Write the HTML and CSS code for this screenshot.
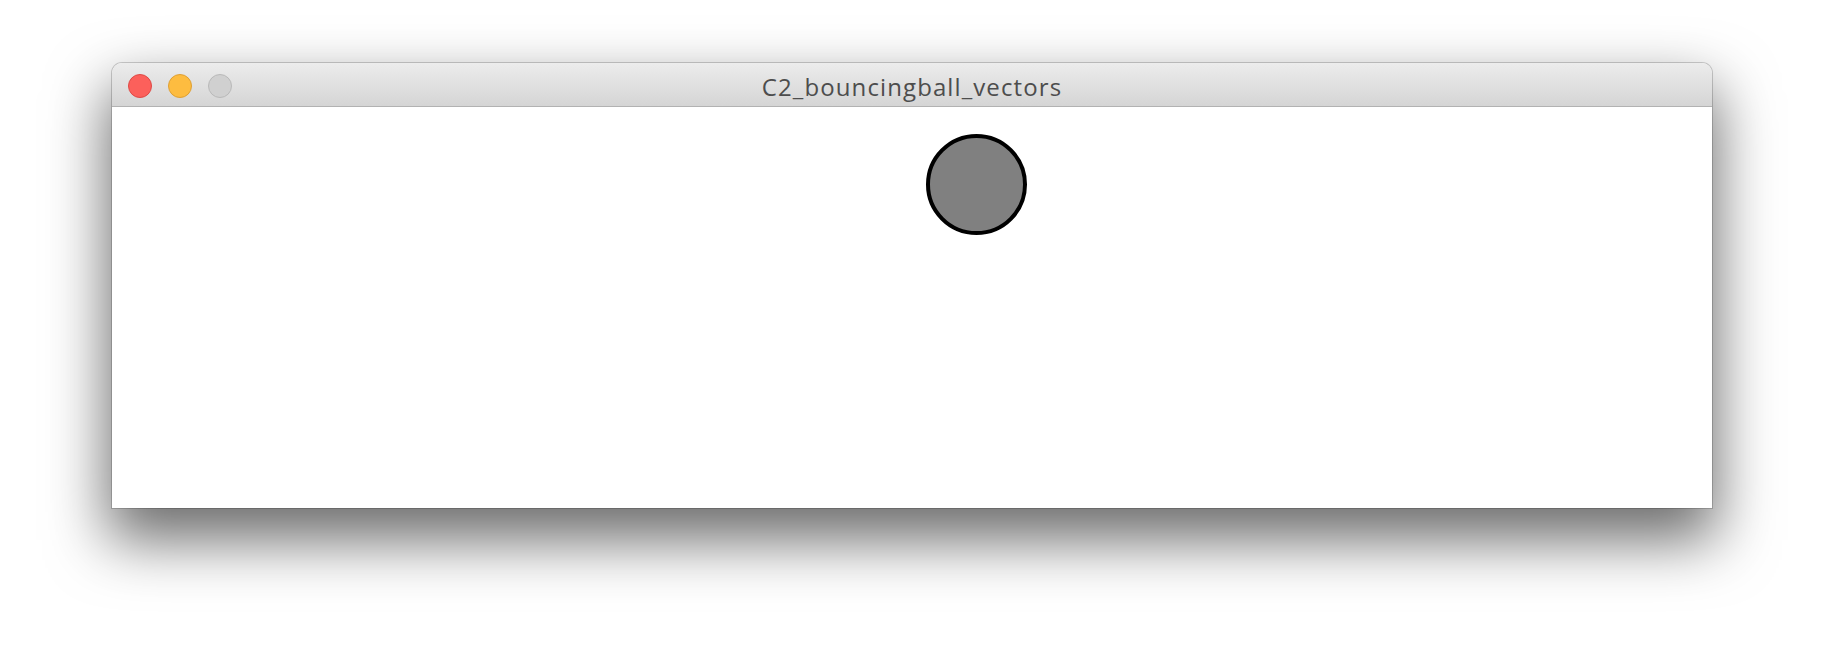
FILE: index.html
```html
<!DOCTYPE html>
<html>
<head>
<meta charset="utf-8">
<link rel="stylesheet" href="styles.css">
</head>
<body>
<div class="window">
  <div class="titlebar">
    <div class="lights">
      <span class="light red"></span>
      <span class="light yellow"></span>
      <span class="light gray"></span>
    </div>
    <div class="title">C2_bouncingball_vectors</div>
  </div>
  <div class="canvas">
    <div class="ball"></div>
  </div>
</div>
</body>
</html>
```
FILE: styles.css
```css
html, body {
  margin: 0;
  padding: 0;
  background: #ffffff;
}
body {
  width: 1824px;
  height: 668px;
  overflow: hidden;
  padding-top: 63px;
  box-sizing: border-box;
}
.window {
  margin-left: 112px;
  width: 1600px;
  height: 445px;
  border-radius: 10px 10px 0 0;
  box-shadow: 0 28px 60px 4px rgba(0,0,0,0.58), 0 0 0 1px rgba(0,0,0,0.18);
  display: flex;
  flex-direction: column;
  background: #fff;
}
.titlebar {
  position: relative;
  height: 43px;
  flex: none;
  border-radius: 10px 10px 0 0;
  background: linear-gradient(#ececec, #d5d5d5);
  border-bottom: 1px solid #b2b2b2;
  display: flex;
  align-items: center;
  justify-content: center;
}
.lights {
  position: absolute;
  left: 16px;
  top: 11px;
  display: flex;
  gap: 16px;
}
.light {
  width: 24px;
  height: 24px;
  border-radius: 50%;
  box-sizing: border-box;
  display: block;
}
.red { background: #fc605b; border: 1px solid #de4a46; }
.yellow { background: #fdbc40; border: 1px solid #dea034; }
.gray { background: #d0d0d0; border: 1px solid #b9b9b9; }
.title {
  font-family: "Open Sans", "Liberation Sans", sans-serif;
  font-size: 24px;
  letter-spacing: 1.1px;
  color: #4d4d4d;
  margin-top: 3px;
}
.canvas {
  flex: 1;
  background: #fff;
  position: relative;
}
.ball {
  position: absolute;
  left: 814px;
  top: 27px;
  width: 101px;
  height: 101px;
  box-sizing: border-box;
  border-radius: 50%;
  background: #808080;
  border: 4px solid #000;
}
```
